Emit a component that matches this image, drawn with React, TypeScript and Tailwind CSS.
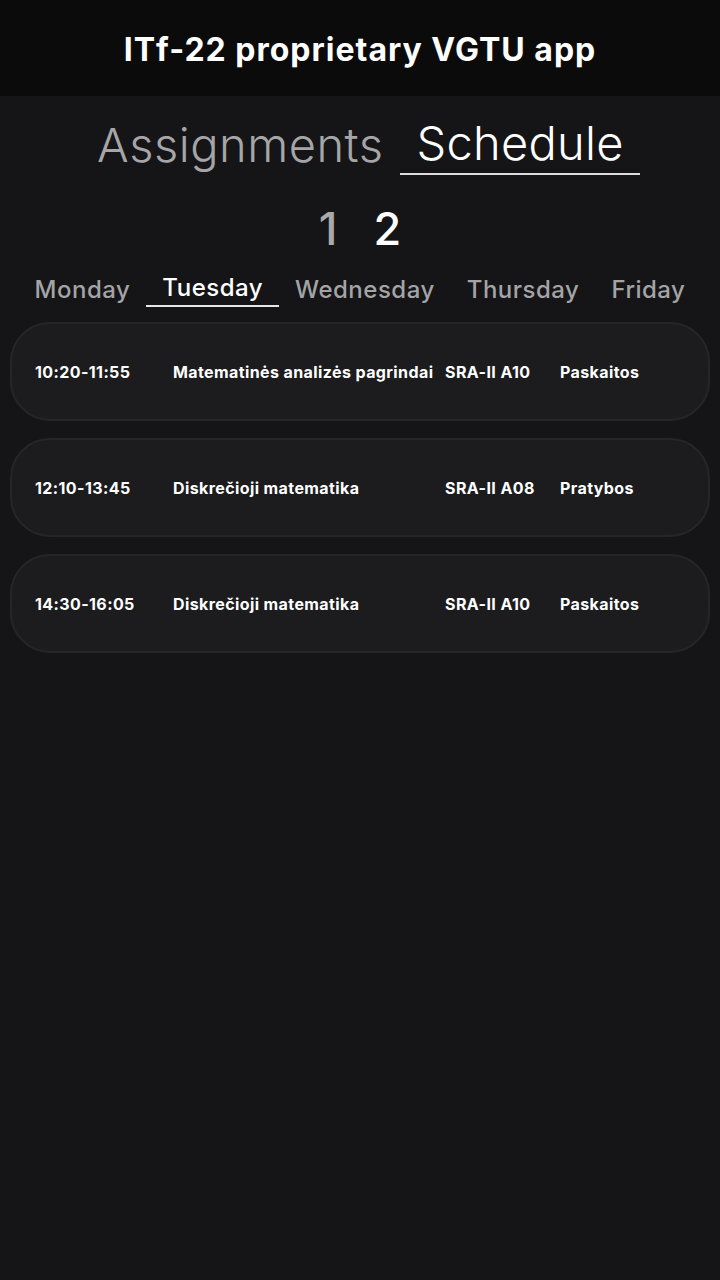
import React from "react";

const rows = [
  { time: "10:20-11:55", subject: "Matematinės analizės pagrindai", room: "SRA-II A10", type: "Paskaitos" },
  { time: "12:10-13:45", subject: "Diskrečioji matematika", room: "SRA-II A08", type: "Pratybos" },
  { time: "14:30-16:05", subject: "Diskrečioji matematika", room: "SRA-II A10", type: "Paskaitos" },
];

const days = ["Monday", "Tuesday", "Wednesday", "Thursday", "Friday"];

export default function App() {
  return (
    <div
      className="min-h-[1280px] w-[720px] bg-[#151517] text-white"
      style={{ fontFamily: "Inter, 'Noto Sans', sans-serif" }}
    >
      <header className="flex h-[96px] items-center justify-center bg-[#0b0b0b]">
        <h1 className="pt-[4px] text-[32px] font-bold tracking-[1px]">ITf-22 proprietary VGTU app</h1>
      </header>

      <div className="flex justify-center pt-[17px]">
        <div className="flex items-end">
          <button className="px-[17px] pb-[0px] text-[47px] font-light leading-[60px] tracking-[0.5px] text-[#a6a6a8]">
            Assignments
          </button>
          <button className="border-b-2 border-[#dcdcdc] px-[16px] pb-[0px] text-[47px] font-light leading-[60px] tracking-[0.3px] text-white">
            Schedule
          </button>
        </div>
      </div>

      <div className="flex justify-center gap-[36px] pt-[26px] text-[45px] font-medium leading-[56px]">
        <span className="text-[#a9a9ab]">1</span>
        <span className="text-white">2</span>
      </div>

      <div className="flex justify-center pt-[16px]">
        {days.map((d) => (
          <span
            key={d}
            className={
              d === "Tuesday"
                ? "border-b-2 border-[#e6e6e6] px-[16px] pb-[2px] text-[24px] font-medium leading-[30px] tracking-[0.5px] text-white"
                : "px-[16px] pt-[2px] text-[24px] font-medium leading-[30px] tracking-[0.5px] text-[#a4a4a6]"
            }
          >
            {d}
          </span>
        ))}
      </div>

      <div className="flex flex-col gap-[17px] px-[10px] pt-[15px]">
        {rows.map((r, i) => (
          <div
            key={i}
            className="grid h-[99px] grid-cols-[138px_272px_115px_1fr] items-center rounded-[40px] border-2 border-[#262628] bg-[#1c1c1e] pl-[23px] text-[16px] font-bold tracking-[0.4px]"
          >
            <span>{r.time}</span>
            <span className="whitespace-nowrap">{r.subject}</span>
            <span>{r.room}</span>
            <span>{r.type}</span>
          </div>
        ))}
      </div>
    </div>
  );
}
